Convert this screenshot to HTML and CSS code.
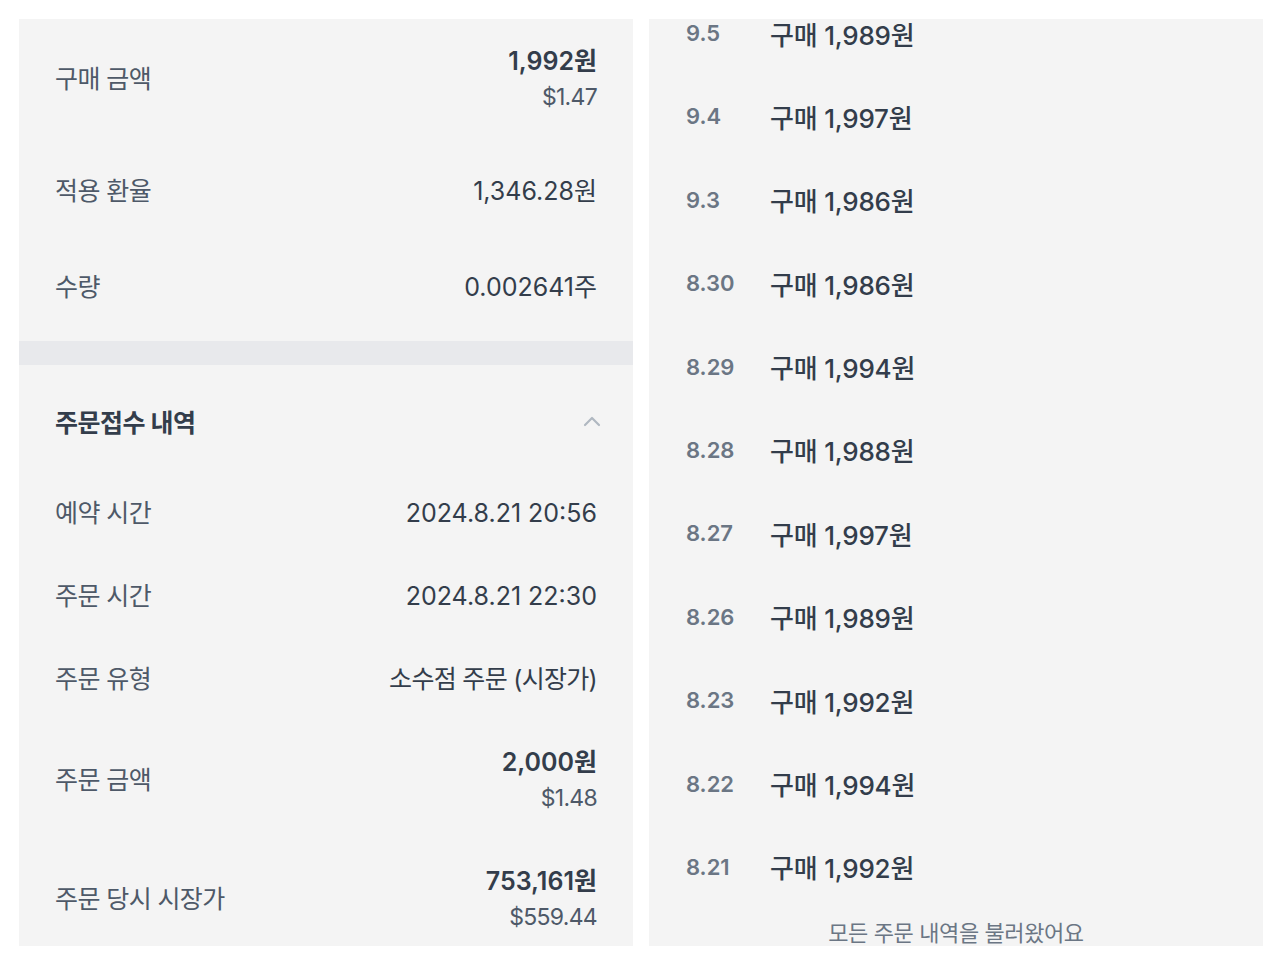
FILE: index.html
```html
<!DOCTYPE html>
<html lang="ko">
<head>
<meta charset="utf-8">
<title>주문 상세</title>
<link rel="stylesheet" href="styles.css">
</head>
<body>
<main class="page">
  <section class="panel panel-left">
    <div class="row row-double row-first">
      <span class="label">구매 금액</span>
      <div class="value-stack">
        <span class="value strong">1,992원</span>
        <span class="value sub">$1.47</span>
      </div>
    </div>
    <div class="row row-gap">
      <span class="label">적용 환율</span>
      <span class="value">1,346.28원</span>
    </div>
    <div class="row row-gap2">
      <span class="label">수량</span>
      <span class="value">0.002641주</span>
    </div>
    <div class="divider"></div>
    <div class="section-head">
      <span class="section-title">주문접수 내역</span>
      <svg class="chevron" width="18" height="12" viewBox="0 0 18 12" aria-hidden="true">
        <path d="M2 10 L9 3 L16 10" fill="none" stroke="#b0b8c1" stroke-width="2.2" stroke-linecap="round" stroke-linejoin="round"/>
      </svg>
    </div>
    <div class="row">
      <span class="label">예약 시간</span>
      <span class="value">2024.8.21 20:56</span>
    </div>
    <div class="row">
      <span class="label">주문 시간</span>
      <span class="value">2024.8.21 22:30</span>
    </div>
    <div class="row">
      <span class="label">주문 유형</span>
      <span class="value value-ko">소수점 주문 (시장가)</span>
    </div>
    <div class="row row-double">
      <span class="label">주문 금액</span>
      <div class="value-stack">
        <span class="value strong">2,000원</span>
        <span class="value sub">$1.48</span>
      </div>
    </div>
    <div class="row row-double">
      <span class="label">주문 당시 시장가</span>
      <div class="value-stack">
        <span class="value strong">753,161원</span>
        <span class="value sub">$559.44</span>
      </div>
    </div>
  </section>

  <section class="panel panel-right">
    <ul class="history">
      <li class="entry"><span class="date">9.5</span><span class="deal">구매 1,989원</span></li>
      <li class="entry"><span class="date">9.4</span><span class="deal">구매 1,997원</span></li>
      <li class="entry"><span class="date">9.3</span><span class="deal">구매 1,986원</span></li>
      <li class="entry"><span class="date">8.30</span><span class="deal">구매 1,986원</span></li>
      <li class="entry"><span class="date">8.29</span><span class="deal">구매 1,994원</span></li>
      <li class="entry"><span class="date">8.28</span><span class="deal">구매 1,988원</span></li>
      <li class="entry"><span class="date">8.27</span><span class="deal">구매 1,997원</span></li>
      <li class="entry"><span class="date">8.26</span><span class="deal">구매 1,989원</span></li>
      <li class="entry"><span class="date">8.23</span><span class="deal">구매 1,992원</span></li>
      <li class="entry"><span class="date">8.22</span><span class="deal">구매 1,994원</span></li>
      <li class="entry"><span class="date">8.21</span><span class="deal">구매 1,992원</span></li>
    </ul>
    <p class="footer-note">모든 주문 내역을 불러왔어요</p>
  </section>
</main>
</body>
</html>
```

FILE: styles.css
```css
* { box-sizing: border-box; }

html, body {
  margin: 0;
  padding: 0;
  background: #ffffff;
}

body {
  font-family: "Inter", "Noto Sans CJK KR", sans-serif;
  color: #333d4b;
}

.page {
  display: flex;
  gap: 16px;
  padding: 19px 17px 15px 19px;
}

.panel {
  width: 614px;
  height: 927px;
  overflow: hidden;
  background: #f4f4f4;
}

/* ---------- left panel ---------- */
.row {
  display: flex;
  align-items: center;
  justify-content: space-between;
  height: 83px;
  padding: 0 36px;
  flex-shrink: 0;
}

.row-double { height: 119px; }
.row-first { height: 119px; }
.row-gap { margin-top: 11px; }
.row-gap2 { margin-top: 13px; }

.label {
  font-size: 25px;
  letter-spacing: -0.6px;
  color: #4e5968;
  line-height: 36px;
}

.value {
  font-size: 25px;
  letter-spacing: 0;
  color: #333d4b;
  line-height: 36px;
  text-align: right;
}

.value-ko {
  letter-spacing: -0.7px;
}

.value-stack {
  display: flex;
  flex-direction: column;
  align-items: flex-end;
}

.value.strong {
  font-weight: 600;
}

.value.sub {
  font-size: 23px;
  letter-spacing: -0.7px;
  color: #4e5968;
}

.divider {
  height: 24px;
  margin-top: 13px;
  background: #e8e9ec;
}

.section-head {
  display: flex;
  align-items: center;
  justify-content: space-between;
  height: 106px;
  padding: 6px 36px 0 36px;
}

.section-title {
  font-size: 25px;
  font-weight: 700;
  letter-spacing: -0.5px;
  color: #333d4b;
}

.chevron {
  margin-right: -4px;
}

/* ---------- right panel ---------- */
.history {
  list-style: none;
  margin: -27.7px 0 0 0;
  padding: 0;
}

.entry {
  display: flex;
  align-items: center;
  height: 83.4px;
  padding-left: 37px;
}

.date {
  width: 84px;
  font-size: 22px;
  font-weight: 600;
  color: #6b7684;
}

.deal {
  font-size: 26px;
  font-weight: 500;
  letter-spacing: -0.2px;
  color: #333d4b;
}

.footer-note {
  margin: 0;
  height: 48px;
  line-height: 48px;
  text-align: center;
  font-size: 22px;
  letter-spacing: -0.4px;
  color: #6b7684;
}
```
